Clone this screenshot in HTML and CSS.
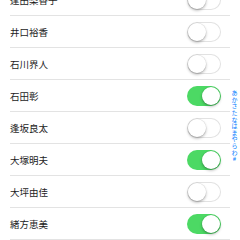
FILE: index.html
```html
<!DOCTYPE html>
<html lang="ja">
<head>
<meta charset="utf-8">
<link rel="stylesheet" href="styles.css">
</head>
<body>
<div class="screen">
  <ul class="list">
    <li class="row"><span class="name">逢田梨香子</span><span class="toggle"></span></li>
    <li class="row"><span class="name">井口裕香</span><span class="toggle"></span></li>
    <li class="row"><span class="name">石川界人</span><span class="toggle"></span></li>
    <li class="row"><span class="name">石田彰</span><span class="toggle on"></span></li>
    <li class="row"><span class="name">逢坂良太</span><span class="toggle"></span></li>
    <li class="row"><span class="name">大塚明夫</span><span class="toggle on"></span></li>
    <li class="row"><span class="name">大坪由佳</span><span class="toggle"></span></li>
    <li class="row"><span class="name">緒方恵美</span><span class="toggle on"></span></li>
  </ul>
  <div class="index">
    <div class="idx">あ</div><div class="idx">か</div><div class="idx">さ</div><div class="idx">た</div><div class="idx">な</div><div class="idx">は</div><div class="idx">ま</div><div class="idx">や</div><div class="idx">ら</div><div class="idx">わ</div><div class="idx">#</div>
  </div>
</div>
</body>
</html>
```
FILE: styles.css
```css
html, body {
  margin: 0;
  padding: 0;
  background: #fff;
}
.screen {
  position: relative;
  width: 240px;
  height: 240px;
  overflow: hidden;
  font-family: "Noto Sans CJK JP", "Noto Sans", sans-serif;
}
.list {
  list-style: none;
  margin: -16px 0 0 0;
  padding: 0;
}
.row {
  display: flex;
  align-items: center;
  justify-content: space-between;
  height: 31px;
  margin: 0 10px 0 10px;
  padding-right: 9px;
  border-bottom: 1px solid #e3e3e3;
}
.name {
  font-size: 9.5px;
  color: #1c1c1c;
}
.toggle {
  position: relative;
  width: 34px;
  height: 20px;
  border-radius: 10px;
  box-sizing: border-box;
  background: #fff;
  box-shadow: inset 0 0 0 1px #e2e2e2;
}
.toggle::after {
  content: "";
  position: absolute;
  top: 1px;
  left: 1px;
  width: 18px;
  height: 18px;
  border-radius: 50%;
  background: #fff;
  box-shadow: 0 1.5px 3px rgba(0,0,0,0.3), 0 0 0 0.5px rgba(0,0,0,0.08);
}
.toggle.on {
  background: #4cd964;
  box-shadow: none;
}
.toggle.on::after {
  left: 15px;
}
.index {
  position: absolute;
  top: 90px;
  left: 230px;
  width: 9px;
}
.idx {
  display: block;
  height: 6.65px;
  line-height: 6.65px;
  font-size: 6px;
  text-align: center;
  color: #007aff;
  white-space: nowrap;
}
```
